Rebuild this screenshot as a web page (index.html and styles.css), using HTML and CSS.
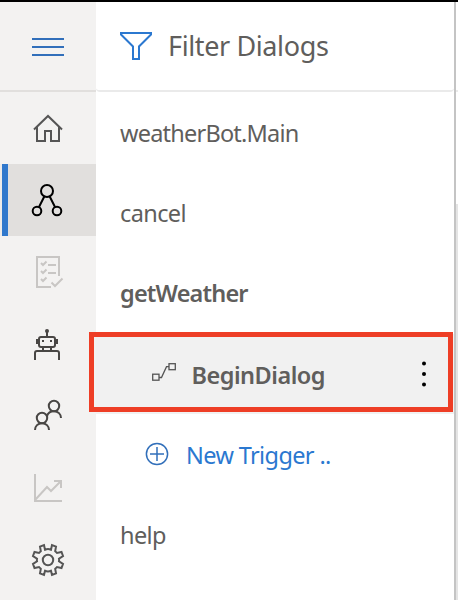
FILE: index.html
```html
<!DOCTYPE html>
<html lang="en">
<head>
<meta charset="utf-8">
<title>Dialogs</title>
<link rel="stylesheet" href="styles.css">
</head>
<body>
<div class="app">
  <nav class="rail">
    <div class="rail-item menu"><svg width="96" height="88" viewBox="0 2 96 88" fill="none" stroke="#316fba" stroke-width="2"><path d="M32 39H64M32 47H64M32 55H64"/></svg></div>
    <div class="rail-item"><svg width="96" height="72" viewBox="0 92 96 72" fill="none" stroke="#555" stroke-width="2"><path d="M34 129.500L48 116L62 129.500M37 127V141H45V131H51V141H59V127"/></svg></div>
    <div class="rail-item selected"><svg width="96" height="72" viewBox="0 164 96 72" fill="none" stroke="#000" stroke-width="2"><circle cx="47" cy="191" r="6"/><circle cx="37" cy="211" r="4.300"/><circle cx="57" cy="211" r="4.300"/><path d="M44.300 196.500L39 207M49.700 196.500L55 207"/></svg></div>
    <div class="rail-item"><svg width="96" height="72" viewBox="0 236 96 72" fill="none" stroke="#c8c6c4" stroke-width="2"><path d="M51 287H37V257H59V276M48 265H56M48 273H56"/><path d="M41 263L43 265L46.500 261.500M41 271L43 273L46.500 269.500M41 279L43 281L46.500 277.500M51.500 282.500L55 286L62.500 278.500"/></svg></div>
    <div class="rail-item"><svg width="96" height="72" viewBox="0 308 96 72" fill="none" stroke="#484644" stroke-width="2"><rect x="39" y="337" width="16" height="10" rx="2"/><path d="M47 331V337M43 347V351M51 347V351M37 339V344M57 339V344M35 360V353Q35 351 37 351H57Q59 351 59 353V360"/><circle cx="47" cy="331" r="2" fill="#484644" stroke="none"/><path d="M42 341H44M50 341H52"/></svg></div>
    <div class="rail-item"><svg width="96" height="72" viewBox="0 380 96 72" fill="none" stroke="#484644" stroke-width="2"><circle cx="54" cy="406" r="5.200"/><circle cx="42" cy="418" r="5.200"/><path d="M35 430C35 426 38 423.200 42 423.200S49 426 49 430M47 416C48 413 50.500 411.200 54 411.200C58 411.200 61 414 61 418"/></svg></div>
    <div class="rail-item"><svg width="96" height="72" viewBox="0 452 96 72" fill="none" stroke="#c8c6c4" stroke-width="2"><path d="M35 474V501H62M35.500 499.500L47 487L51 491L61 481M54 481H61V488"/></svg></div>
    <div class="rail-item"><svg width="96" height="72" viewBox="0 524 96 72" fill="none" stroke="#555" stroke-width="2"><circle cx="48" cy="560" r="5.200"/><path d="M45 549.700Q48 548.500 51 549.700L52 545L56 546.600L55.200 551.200Q56.200 552 57 553L61.500 552L63 556L59 558.700Q59.300 560 59 561.300L63 564L61.500 568L57 567Q56.200 568 55.200 568.800L56 573.400L52 575L51 570.800Q48 572 45 570.800L44 575L40 573.400L40.800 568.800Q39.800 568 39 567L34.500 568L33 564L37 561.300Q36.700 560 37 558.700L33 556L34.500 552L39 553Q39.800 552 40.800 551.200L40 546.600L44 545Z"/></svg></div>
  </nav>
  <main class="panel">
    <header class="filter">
      <svg class="funnel" width="32" height="28" viewBox="0 0 32 28" fill="none" stroke="#2b78d0" stroke-width="2"><path d="M1 1H31V2.500L19 14.500V27H13V14.500L1 2.500Z"/></svg>
      <span class="filter-text">Filter Dialogs</span>
    </header>
    <ul class="dialogs">
      <li class="row"><span class="t-main">weatherBot.Main</span></li>
      <li class="row"><span class="t-cancel">cancel</span></li>
      <li class="row strong"><span class="t-get">getWeather</span></li>
      <li class="row strong trigger">
        <svg class="flow" width="24" height="18" viewBox="0 0 24 18" fill="none" stroke="#555" stroke-width="1.300"><rect x=".700" y="11.200" width="6.300" height="6"/><rect x="17" y=".700" width="6.300" height="6"/><path d="M7 14.500H9.500L14.500 3.700H17"/></svg>
        <span class="t-begin">BeginDialog</span>
        <svg class="more" width="6" height="26" viewBox="0 0 6 26"><circle cx="3" cy="2.500" r="2"/><circle cx="3" cy="13" r="2"/><circle cx="3" cy="23.500" r="2"/></svg>
        <div class="highlight"></div>
      </li>
      <li class="row new">
        <svg class="plus" width="24" height="24" viewBox="0 0 24 24" fill="none" stroke="#316fba" stroke-width="1.500"><circle cx="12" cy="12" r="10.600"/><path d="M5 12H19M12 5V19"/></svg>
        <span class="t-new">New Trigger ..</span>
      </li>
      <li class="row"><span class="t-help">help</span></li>
    </ul>
  </main>
  <aside class="edge"><div class="edge-top"></div><div class="edge-mid"></div></aside>
</div>
</body>
</html>
```
FILE: styles.css
```css
* { box-sizing: border-box; }
body { margin: 0; background: #fff; font-family: "Noto Sans", "Open Sans", sans-serif; color: #605e5c; }
svg { display: block; flex: none; }
.app { display: flex; width: 458px; height: 600px; border-top: 2px solid #000; overflow: hidden; }
.rail { width: 96px; flex: none; background: #f3f2f1; }
.rail-item { height: 72px; overflow: hidden; }
.menu { height: 90px; border-bottom: 2px solid #e1dfdd; }
.selected { background: #e1dfdd; box-shadow: inset 2px 0 #edebe9, inset 8px 0 #3078cc; }
.panel { width: 358px; flex: none; background: #fff; }
.filter { height: 90px; display: flex; align-items: flex-start; padding: 30px 0 0 24px; border-bottom: 2px solid #eaeaea; border-radius: 0 0 4px 4px; }
.filter-text { margin: -4px 0 0 16px; font-size: 27px; line-height: 36px; letter-spacing: -0.38px; white-space: nowrap; }
.dialogs { list-style: none; margin: 0; padding: 2px 0 0; }
.row { height: 80px; display: flex; align-items: center; padding-left: 24px; font-size: 23.500px; line-height: 32px; letter-spacing: -0.5px; white-space: nowrap; }
.t-main { letter-spacing: -0.78px; margin-bottom: 2px; }
.t-cancel, .t-get { margin-bottom: 2px; }
.t-cancel { letter-spacing: -0.6px; }
.t-get { letter-spacing: -0.82px; }
.t-help { margin-top: 2px; letter-spacing: -0.6px; }
.strong { font-weight: 600; }
.trigger { position: relative; background: #f1f1f1; padding-left: 56px; }
.flow { margin-bottom: 4px; }
.t-begin { margin: 2px 0 0 15.500px; }
.more { margin: 0 27px 0 auto; }
.highlight { position: absolute; left: -7px; top: -2px; width: 364px; height: 80px; border: 5px solid #ee3e26; }
.new { color: #2b78d0; padding-left: 49px; }
.t-new { margin: 2px 0 0 17px; letter-spacing: -0.62px; }
.plus { margin-bottom: 1px; }
.edge { flex: 1; border-left: 2px solid #c4c4c4; }
.edge-top { height: 90px; border-bottom: 2px solid #eaeaea; }
.edge-mid { margin-top: 112px; height: 396px; background: #e4e4e4; }
```
